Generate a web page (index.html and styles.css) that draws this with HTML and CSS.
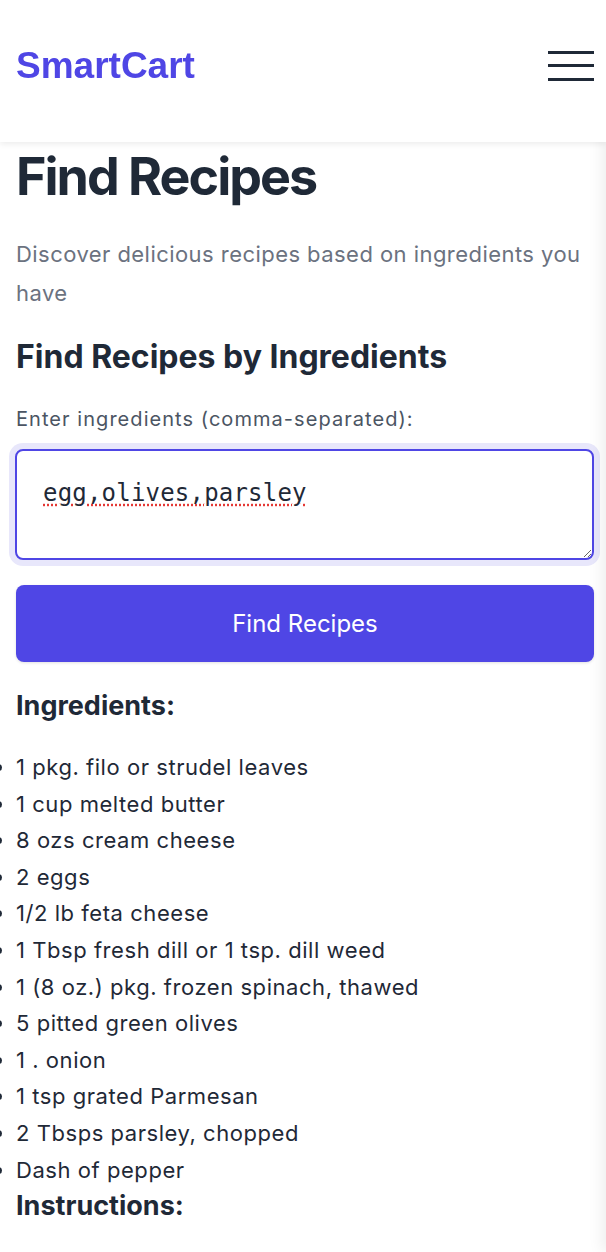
FILE: index.html
```html
<!DOCTYPE html>
<html lang="en">
<head>
<meta charset="utf-8">
<title>SmartCart – Find Recipes</title>
<link rel="stylesheet" href="styles.css">
</head>
<body>
<header class="site-header">
  <a class="logo" href="#">SmartCart</a>
  <button class="menu-btn" aria-label="Open menu">
    <span class="bar"></span><span class="bar"></span><span class="bar"></span>
  </button>
</header>
<aside class="drawer" aria-hidden="true"></aside>
<main class="page">
  <h1 class="title">Find Recipes</h1>
  <p class="subtitle">Discover delicious recipes based on ingredients you have</p>

  <section class="finder">
    <h2 class="finder-title">Find Recipes by Ingredients</h2>
    <label class="field-label" for="ingredients">Enter ingredients (comma-separated):</label>
    <div class="field-ring">
      <textarea id="ingredients" class="field" spellcheck="false">egg,olives,parsley</textarea>
    </div>
    <button class="primary-btn">Find Recipes</button>
  </section>

  <section class="recipe">
    <h3 class="recipe-heading">Ingredients:</h3>
    <ul class="ingredient-list">
      <li>1 pkg. filo or strudel leaves</li>
      <li>1 cup melted butter</li>
      <li>8 ozs cream cheese</li>
      <li>2 eggs</li>
      <li>1/2 lb feta cheese</li>
      <li>1 Tbsp fresh dill or 1 tsp. dill weed</li>
      <li>1 (8 oz.) pkg. frozen spinach, thawed</li>
      <li>5 pitted green olives</li>
      <li>1 . onion</li>
      <li>1 tsp grated Parmesan</li>
      <li>2 Tbsps parsley, chopped</li>
      <li>Dash of pepper</li>
    </ul>
    <h3 class="recipe-heading recipe-heading--tight">Instructions:</h3>
  </section>
</main>
</body>
</html>
```
FILE: styles.css
```css
* { box-sizing: border-box; }
html, body { margin: 0; padding: 0; }
body {
  font-family: Inter, "Noto Sans", "Liberation Sans", sans-serif;
  color: #1f2937;
  background: #ffffff;
  overflow: hidden;
}

.site-header {
  height: 142px;
  display: flex;
  align-items: center;
  justify-content: space-between;
  padding: 0 12px 11px 16px;
  background: #fff;
  box-shadow: 0 2px 6px rgba(0,0,0,0.08);
  position: relative;
  z-index: 2;
}
.logo {
  font-family: "Liberation Sans", Arial, sans-serif;
  font-weight: 700;
  font-size: 37px;
  color: #4f46e5;
  text-decoration: none;
}
.menu-btn {
  background: none;
  border: 0;
  padding: 0;
  width: 46px;
  display: flex;
  flex-direction: column;
  gap: 10.5px;
  cursor: pointer;
}
.menu-btn .bar {
  display: block;
  height: 3px;
  background: #1f2937;
}

.drawer {
  position: fixed;
  top: 0;
  left: 606px;
  width: 300px;
  height: 100%;
  background: #fff;
  box-shadow: -4px 0 14px rgba(0,0,0,0.07);
}

.page {
  padding: 0 12px 0 16px;
}
.title {
  margin: 3px 0 0;
  font-size: 52px;
  font-weight: 700;
  letter-spacing: -2px;
  line-height: 64px;
}
.subtitle {
  margin: 26px 0 0;
  font-size: 22px;
  letter-spacing: 0.45px;
  line-height: 39px;
  color: #6b7280;
}

.finder-title {
  margin: 24px 0 0;
  font-size: 32px;
  font-weight: 700;
  letter-spacing: 0;
  line-height: 40px;
}
.field-label {
  display: block;
  margin-top: 28px;
  font-size: 20px;
  font-weight: 400;
  letter-spacing: 1.05px;
  color: #4b5563;
  line-height: 28px;
}
.field-ring {
  margin: 10px -6px 0 -7px;
  padding: 6px;
  border-radius: 14px;
  background: #e8e7fb;
}
.field {
  display: block;
  width: 100%;
  height: 111px;
  padding: 25px 26px 20px;
  border: 2px solid #4f46e5;
  border-radius: 8px;
  font-family: "DejaVu Sans Mono", monospace;
  font-size: 24px;
  letter-spacing: 0.2px;
  line-height: 34px;
  color: #1f2937;
  background: #fff;
  outline: none;
  resize: vertical;
  text-decoration: underline dotted #e53935;
  text-underline-offset: 3px;
}
.primary-btn {
  display: block;
  width: 100%;
  height: 77px;
  margin-top: 19px;
  border: 0;
  border-radius: 8px;
  background: #4f46e5;
  color: #fff;
  font-family: inherit;
  font-size: 24px;
  font-weight: 400;
  box-shadow: 0 1px 3px rgba(0,0,0,0.12);
}

.recipe-heading {
  margin: 26px 0 0;
  font-size: 27px;
  font-weight: 700;
  letter-spacing: 0;
  line-height: 36px;
}
.recipe-heading--tight { margin-top: 0; }
.ingredient-list {
  margin: 25px 0 0;
  padding-left: 0;
  list-style: disc outside;
  font-size: 22px;
  letter-spacing: 0.55px;
  line-height: 36.6px;
  color: #1f2937;
}
```
